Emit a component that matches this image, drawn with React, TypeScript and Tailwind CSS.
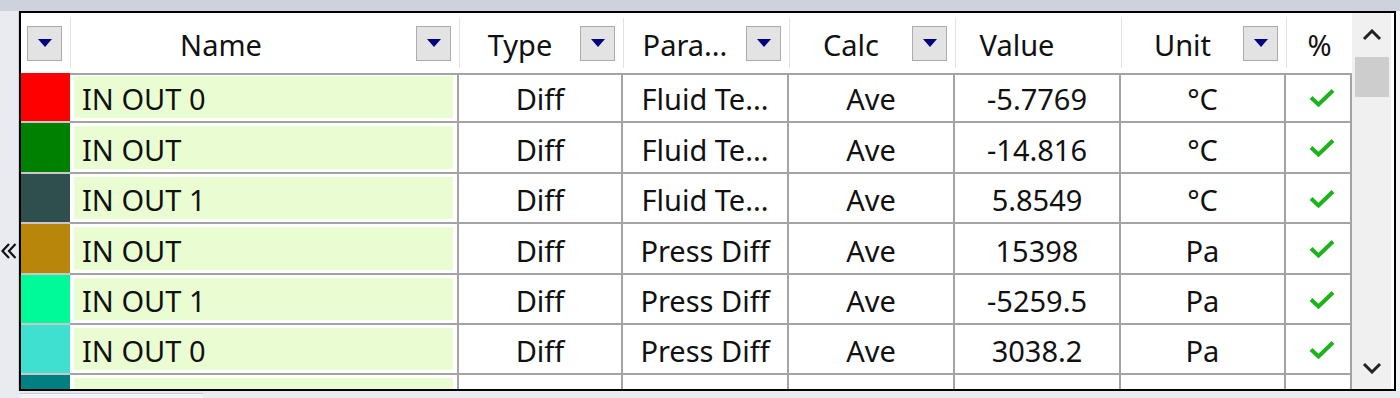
type Row = {
    color: string
    h: string
    name: string
    type: string
    param: string
    calc: string
    value: string
    unit: string
}

const rows: Row[] = [
    { color: "bg-[#ff0000]", h: "h-[50px]", name: "IN OUT 0", type: "Diff", param: "Fluid Te...", calc: "Ave", value: "-5.7769", unit: "°C" },
    { color: "bg-[#008000]", h: "h-[51px]", name: "IN OUT", type: "Diff", param: "Fluid Te...", calc: "Ave", value: "-14.816", unit: "°C" },
    { color: "bg-[#2f4f4f]", h: "h-[50px]", name: "IN OUT 1", type: "Diff", param: "Fluid Te...", calc: "Ave", value: "5.8549", unit: "°C" },
    { color: "bg-[#b8860b]", h: "h-[51px]", name: "IN OUT", type: "Diff", param: "Press Diff", calc: "Ave", value: "15398", unit: "Pa" },
    { color: "bg-[#00fa9a]", h: "h-[50px]", name: "IN OUT 1", type: "Diff", param: "Press Diff", calc: "Ave", value: "-5259.5", unit: "Pa" },
    { color: "bg-[#40e0d0]", h: "h-[50px]", name: "IN OUT 0", type: "Diff", param: "Press Diff", calc: "Ave", value: "3038.2", unit: "Pa" },
    { color: "bg-[#008080]", h: "h-[50px]", name: "IN OUT 2", type: "Diff", param: "Press Diff", calc: "Ave", value: "1120.4", unit: "Pa" },
]

const cols = "grid grid-cols-[49px_389px_164px_166px_166px_166px_165px_66px]"
const cell = "flex items-center justify-center whitespace-nowrap border-r-2 border-b-2 border-[#a3a3a3] pt-[3px]"

function DropBtn() {
    return (
        <div className="flex h-[35px] w-[35px] shrink-0 items-center justify-center border border-[#acacac] bg-[#e3e3e3]">
            <svg width="14" height="8" viewBox="0 0 14 8">
                <polygon points="0,0 14,0 7,8" fill="#000080" />
            </svg>
        </div>
    )
}

function Tick() {
    return (
        <svg width="26" height="19" viewBox="0 0 26 19">
            <path d="M2 9.5 L9.5 16.5 L24 2.5" fill="none" stroke="#1bb41b" strokeWidth="4" strokeLinejoin="miter" />
        </svg>
    )
}

function HeadCell({ label, btn, pad }: { label: string; btn?: boolean; pad?: string }) {
    return (
        <div className="flex items-center border-b-2 border-[#a3a3a3]">
            <div className="my-[5px] flex h-[50px] w-full items-center border-l border-[#e2e2e2] pr-[8px]">
                <span className={`flex-1 pt-[2px] text-center ${pad ?? ""}`}>{label}</span>
                {btn ? <DropBtn /> : <div className="w-[35px] shrink-0" />}
            </div>
        </div>
    )
}

export default function App() {
    return (
        <div className="flex h-[398px] w-[1400px] flex-col overflow-hidden bg-[#e9ebf0] font-['Noto_Sans',sans-serif] text-[29px] leading-none text-[#111]">
            <div className="h-[11px] shrink-0 bg-[#ced2dc]" />
            <div className="flex min-h-0 flex-1">
                <div className="relative w-[19px] shrink-0 border-r border-[#cfd1d6]">
                    <svg className="absolute left-0 top-[231px]" width="17" height="18" viewBox="0 0 17 18">
                        <path d="M9 2 L2.5 9 L9 16 M15.5 2 L9 9 L15.5 16" fill="none" stroke="#111" strokeWidth="2.2" />
                    </svg>
                </div>
                <div className="flex w-[1377px] shrink-0 overflow-hidden border-2 border-black bg-white">
                    <div className="w-[1331px] shrink-0">
                        <div className={`${cols} h-[60px]`}>
                            <div className="flex items-center border-b-2 border-[#a3a3a3] pl-[6px]">
                                <DropBtn />
                            </div>
                            <HeadCell label="Name" btn pad="pr-[45px]" />
                            <HeadCell label="Type" btn />
                            <HeadCell label="Para..." btn />
                            <HeadCell label="Calc" btn />
                            <HeadCell label="Value" />
                            <HeadCell label="Unit" btn />
                            <div className="flex items-center border-b-2 border-[#a3a3a3]">
                                <div className="my-[5px] flex h-[50px] w-full items-center justify-center border-l border-[#e2e2e2] pt-[2px]">
                                    %
                                </div>
                            </div>
                        </div>
                        {rows.map((r, i) => (
                            <div key={i} className={`${cols} ${r.h}`}>
                                <div className={`${r.color} border-b-2 border-[#cfc6cc]`} />
                                <div className="flex border-r-2 border-b-2 border-[#a3a3a3] px-[4px] py-[3px]">
                                    <div className="flex flex-1 items-center whitespace-nowrap bg-[#eafdd2] pl-[8px] pt-[3px]">{r.name}</div>
                                </div>
                                <div className={cell}>{r.type}</div>
                                <div className={cell}>{r.param}</div>
                                <div className={cell}>{r.calc}</div>
                                <div className={cell}>{r.value}</div>
                                <div className={cell}>{r.unit}</div>
                                <div className="flex items-center justify-center border-r-2 border-b-2 border-[#a3a3a3] pl-[8px]">
                                    <Tick />
                                </div>
                            </div>
                        ))}
                    </div>
                    <div className="flex w-[42px] shrink-0 flex-col border-r-[3px] border-white bg-[#f0f0f0] pl-[1px]">
                        <div className="flex h-[44px] items-center justify-center">
                            <svg width="20" height="12" viewBox="0 0 20 12">
                                <path d="M2 10 L10 2 L18 10" fill="none" stroke="#222" strokeWidth="3" />
                            </svg>
                        </div>
                        <div className="mx-[2px] h-[40px] bg-[#cdcdcd]" />
                        <div className="flex-1" />
                        <div className="flex h-[42px] items-center justify-center">
                            <svg width="20" height="12" viewBox="0 0 20 12">
                                <path d="M2 2 L10 10 L18 2" fill="none" stroke="#222" strokeWidth="3" />
                            </svg>
                        </div>
                    </div>
                </div>
                <div className="flex-1 bg-[#f4f5f8]" />
            </div>
            <div className="flex h-[7px] shrink-0 pl-[20px]">
                <div className="mt-[2px] w-[183px] border-t border-[#c8ccd4] bg-[#f2f3f6]" />
            </div>
        </div>
    )
}
